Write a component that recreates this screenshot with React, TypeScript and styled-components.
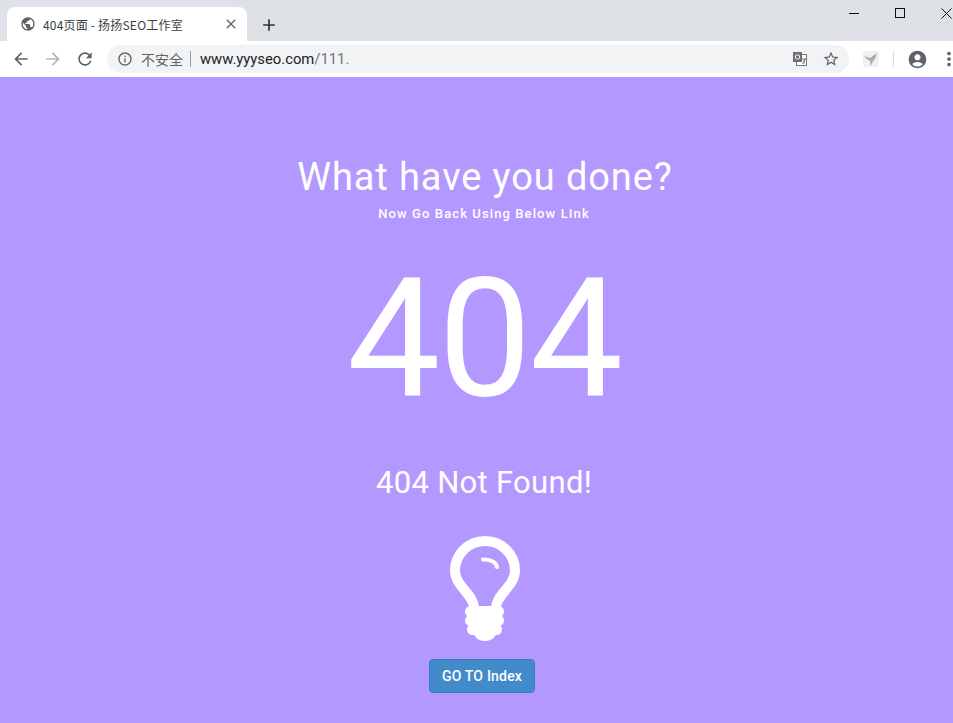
import { createGlobalStyle } from "styled-components";
import styled from "styled-components";
import {
  MdAccountCircle,
  MdAdd,
  MdArrowBack,
  MdArrowForward,
  MdClose,
  MdInfoOutline,
  MdMoreVert,
  MdPublic,
  MdRefresh,
  MdStarBorder,
} from "react-icons/md";

const GlobalStyle = createGlobalStyle`
  html, body {
    margin: 0;
    padding: 0;
    height: 100%;
    overflow: hidden;
    background: #b399ff;
  }
`;

const Browser = styled.div`
  width: 953px;
  height: 723px;
  display: flex;
  flex-direction: column;
  font-family: "Roboto", "Noto Sans CJK SC", sans-serif;
`;

const TabStrip = styled.div`
  height: 41px;
  background: #dee1e6;
  display: flex;
  align-items: flex-end;
  padding-left: 7px;
  position: relative;
  flex: none;
  overflow: hidden;
`;

const Tab = styled.div`
  width: 240px;
  height: 34px;
  background: #fff;
  border-radius: 8px 8px 0 0;
  display: flex;
  align-items: center;
  padding: 0 8px 0 13px;
  box-sizing: border-box;
  color: #3c4043;
  font-size: 12px;
  font-family: "Noto Sans CJK SC", sans-serif;
`;

const TabTitle = styled.span`
  flex: 1;
  margin-left: 7px;
  white-space: nowrap;
  letter-spacing: 0.2px;
`;

const NewTab = styled.div`
  display: flex;
  margin: 0 0 6px 12px;
  color: #303338;
  font-size: 20px;
  height: 20px;
`;

const WindowControls = styled.div`
  position: absolute;
  top: 0;
  right: -16px;
  display: flex;
`;

const WindowButton = styled.div`
  width: 46px;
  height: 26px;
  display: flex;
  align-items: center;
  justify-content: center;
`;

const Toolbar = styled.div`
  height: 36px;
  background: #fff;
  display: flex;
  align-items: center;
  flex: none;
  padding-left: 11px;
  box-sizing: border-box;
  overflow: hidden;
`;

const NavButton = styled.div<{ $color?: string }>`
  display: flex;
  width: 20px;
  margin-right: 12px;
  font-size: 20px;
  color: ${(props) => props.$color || "#5f6368"};
`;

const Omnibox = styled.div`
  width: 742px;
  height: 28px;
  flex: none;
  background: #f1f3f4;
  border-radius: 14px;
  display: flex;
  align-items: center;
  padding: 0 9px 0 10px;
  box-sizing: border-box;
`;

const InfoIcon = styled.div`
  display: flex;
  color: #5f6368;
  font-size: 16px;
`;

const SecurityLabel = styled.span`
  margin-left: 8px;
  font-family: "Noto Sans CJK SC", sans-serif;
  font-size: 14px;
  color: #5f6368;
  padding-right: 7px;
  border-right: 1px solid #9aa0a6;
  line-height: 16px;
`;

const Url = styled.span`
  margin-left: 9px;
  flex: 1;
  font-size: 14.8px;
  color: #202124;
  span {
    color: #70757a;
  }
`;

const OmniIcon = styled.div`
  display: flex;
  margin-left: 14px;
  color: #5f6368;
  font-size: 18px;
`;

const Extension = styled.div`
  display: flex;
  flex: none;
  margin-left: 14px;
`;

const Separator = styled.div`
  width: 1px;
  height: 16px;
  flex: none;
  background: #dadce0;
  margin: 0 13px 0 14px;
`;

const Profile = styled.div`
  display: flex;
  flex: none;
  color: #5f6368;
  font-size: 21px;
`;

const MoreButton = styled.div`
  display: flex;
  flex: none;
  color: #5f6368;
  font-size: 22px;
  margin-left: 10px;
`;

const Page = styled.main`
  flex: 1;
  background: #b399ff;
  color: #fff;
  display: flex;
  flex-direction: column;
  align-items: center;
  padding-left: 15px;
  overflow: hidden;
  font-family: "Roboto", sans-serif;
`;

const Title = styled.h1`
  margin: 78px 0 0 2px;
  font-size: 38px;
  line-height: 44px;
  font-weight: 400;
  letter-spacing: 0.9px;
`;

const Subtitle = styled.p`
  margin: 7px 0 0;
  font-size: 13px;
  line-height: 15px;
  font-weight: 500;
  letter-spacing: 1.1px;
`;

const BigCode = styled.div`
  margin-top: 33px;
  font-size: 166px;
  line-height: 170px;
  font-weight: 400;
  letter-spacing: -2px;
`;

const NotFound = styled.h2`
  margin: 39px 0 0;
  font-size: 31px;
  line-height: 40px;
  font-weight: 400;
  letter-spacing: 0.3px;
`;

const Bulb = styled.svg`
  display: block;
  margin-top: 33px;
  margin-left: 2px;
`;

const IndexButton = styled.a`
  display: block;
  margin: 18px 4px 0 0;
  width: 106px;
  height: 34px;
  box-sizing: border-box;
  background: #428bca;
  border: 1px solid #357ebd;
  border-radius: 4px;
  color: #fff;
  font-size: 14px;
  font-weight: 500;
  line-height: 32px;
  text-align: center;
  letter-spacing: 0.2px;
`;

export default function App() {
  return (
    <Browser>
      <GlobalStyle />
      <TabStrip>
        <Tab>
          <MdPublic size={16} color="#5f6368" />
          <TabTitle>404页面 - 扬扬SEO工作室</TabTitle>
          <MdClose size={16} color="#5f6368" />
        </Tab>
        <NewTab>
          <MdAdd />
        </NewTab>
        <WindowControls>
          <WindowButton>
            <svg width="10" height="10" viewBox="0 0 10 10">
              <path d="M0 5.5h10" stroke="#111" strokeWidth="1" />
            </svg>
          </WindowButton>
          <WindowButton>
            <svg width="10" height="10" viewBox="0 0 10 10">
              <rect x="0.5" y="0.5" width="9" height="9" fill="none" stroke="#111" />
            </svg>
          </WindowButton>
          <WindowButton>
            <svg width="11" height="11" viewBox="0 0 11 11">
              <path d="M0.5 0.5l10 10M10.5 0.5l-10 10" stroke="#111" fill="none" />
            </svg>
          </WindowButton>
        </WindowControls>
      </TabStrip>
      <Toolbar>
        <NavButton>
          <MdArrowBack />
        </NavButton>
        <NavButton $color="#b4b6b9">
          <MdArrowForward />
        </NavButton>
        <NavButton>
          <MdRefresh />
        </NavButton>
        <Omnibox>
          <InfoIcon>
            <MdInfoOutline />
          </InfoIcon>
          <SecurityLabel>不安全</SecurityLabel>
          <Url>
            www.yyyseo.com<span>/111.</span>
          </Url>
          <OmniIcon>
            <svg width="16" height="16" viewBox="0 0 16 16">
              <rect x="4.500" y="3.500" width="10" height="11" fill="#fff" stroke="#777" />
              <rect x="1" y="1" width="9" height="10" fill="#6b6f73" />
              <circle cx="5.500" cy="6" r="2.200" fill="none" stroke="#fff" />
              <path d="M10 8h4M12 8v5M10.500 12.500l3-4" stroke="#777" fill="none" />
            </svg>
          </OmniIcon>
          <OmniIcon>
            <MdStarBorder />
          </OmniIcon>
        </Omnibox>
        <Extension>
          <svg width="16" height="16" viewBox="0 0 16 16">
            <rect width="16" height="16" rx="2" fill="#f0f0f0" />
            <path d="M1 5l6 2 7-5-2 6-2 2-2 5-1-5-3-2z" fill="#a9acae" />
          </svg>
        </Extension>
        <Separator />
        <Profile>
          <MdAccountCircle />
        </Profile>
        <MoreButton>
          <MdMoreVert />
        </MoreButton>
      </Toolbar>
      <Page>
        <Title>What have you done?</Title>
        <Subtitle>Now Go Back Using Below LInk</Subtitle>
        <BigCode>404</BigCode>
        <NotFound>404 Not Found!</NotFound>
        <Bulb width="70" height="105" viewBox="0 0 70 105">
          <path
            d="M24 71C23 58 5 50 5 34.500A30 29.500 0 0 1 65 34.500C65 50 47 58 46 71"
            fill="none"
            stroke="#fff"
            strokeWidth="10"
          />
          <path d="M33 23.500C40 23.500 46 26 47 31" fill="none" stroke="#fff" strokeWidth="4" strokeLinecap="round" />
          <rect x="15" y="70" width="39" height="11" rx="5.500" fill="#fff" />
          <rect x="15" y="79" width="39" height="11" rx="5.500" fill="#fff" />
          <rect x="17" y="88" width="35" height="11" rx="5.500" fill="#fff" />
          <ellipse cx="35" cy="97" rx="11" ry="8" fill="#fff" />
        </Bulb>
        <IndexButton>GO TO Index</IndexButton>
      </Page>
    </Browser>
  );
}
